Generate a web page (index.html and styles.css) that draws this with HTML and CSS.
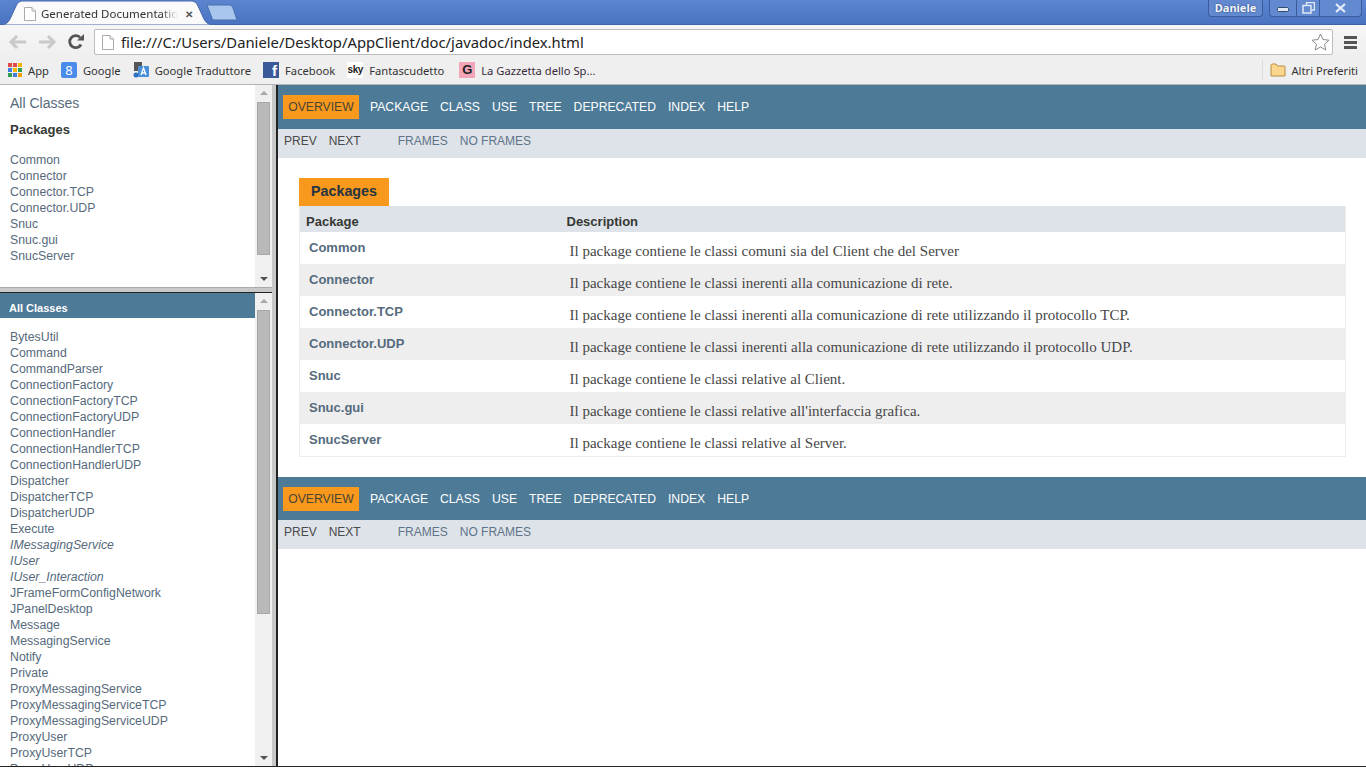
FILE: index.html
```html
<!DOCTYPE html>
<html lang="en">
<head>
    <meta charset="UTF-8">
    <title>Generated Documentation</title>
    <link rel="stylesheet" href="styles.css">
</head>
<body>
    <header class="browser">
        <section class="titlebar">
            <div class="tab">
                <svg class="tab-shape" width="214" height="25" viewBox="0 0 214 25"><path d="M0 25C6 25 9 22 11 17L16 6C18 2 20 1 24 1H190C194 1 196 2 198 6L203 17C205 22 208 25 214 25Z" fill="#fafafa" stroke="#4468a8"/></svg>
                <svg class="page-icon" width="12" height="14" viewBox="0 0 12 14"><path d="M.5.5H8L11.500 4V13.500H.5Z" fill="#fff" stroke="#aaa"/><path d="M8 .5V4H11.500" fill="#eee" stroke="#aaa"/></svg>
                <span class="tab-title">Generated Documentation</span>
                <span class="tab-close">&#10005;</span>
            </div>
            <svg class="new-tab" width="32" height="17" viewBox="0 0 32 17"><path d="M1 1H23C25 1 26 2 27 4L31 16H8C7 16 6 15 6 14Z" fill="#a9c6ef" stroke="#4a6ea8"/></svg>
            <div class="user-box">Daniele</div>
            <div class="win-buttons">
                <div class="win-btn min"><svg width="12" height="6" viewBox="0 0 12 6"><rect x=".5" y=".5" width="11" height="4" rx="1" fill="#dfe8f5" stroke="#33496e"/></svg></div>
                <div class="win-btn max"><svg width="13" height="12" viewBox="0 0 13 12"><path d="M4.500 3V.5H12.500V8H9.500" fill="none" stroke="#dfe8f5" stroke-width="1.500"/><rect x="1" y="3.500" width="8" height="7.500" fill="none" stroke="#dfe8f5" stroke-width="1.500"/></svg></div>
                <div class="win-btn close"><svg width="13" height="10" viewBox="0 0 13 10"><path d="M2 1L11 9M11 1L2 9" stroke="#e6eef9" stroke-width="2.200"/></svg></div>
            </div>
        </section>
        <section class="toolbar">
            <svg class="nav-icon" width="20" height="16" viewBox="0 0 20 16"><path d="M18 8H4M9 2L3 8L9 14" fill="none" stroke="#c9c9c9" stroke-width="3"/></svg>
            <svg class="nav-icon" width="20" height="16" viewBox="0 0 20 16"><path d="M2 8H16M11 2L17 8L11 14" fill="none" stroke="#c9c9c9" stroke-width="3"/></svg>
            <svg class="nav-icon reload" width="18" height="18" viewBox="0 0 18 18"><path d="M14 11.500A6 6 0 1 1 13 4.500" fill="none" stroke="#555" stroke-width="2.800"/><path d="M10 7.500H17V1Z" fill="#555"/></svg>
            <div class="omnibox">
                <svg width="12" height="15" viewBox="0 0 12 15"><path d="M.5.5H8L11.500 4V14.500H.5Z" fill="#fff" stroke="#aaa"/><path d="M8 .5V4H11.500" fill="#eee" stroke="#aaa"/></svg>
                <span class="url">file:///C:/Users/Daniele/Desktop/AppClient/doc/javadoc/index.html</span>
                <svg class="star" width="19" height="18" viewBox="0 0 19 18"><path d="M9.500 1L12 6.500L18 7.200L13.500 11.200L14.800 17L9.500 14L4.200 17L5.500 11.200L1 7.200L7 6.500Z" fill="#fff" stroke="#8a8a8a"/></svg>
            </div>
            <div class="menu-icon"><i></i><i></i><i></i></div>
        </section>
        <section class="bookmarks">
            <a><svg width="14" height="14" viewBox="0 0 14 14"><rect width="4" height="4" fill="#e04a3f"/><rect x="5" width="4" height="4" fill="#e04a3f"/><rect x="10" width="4" height="4" fill="#f5b400"/><rect y="5" width="4" height="4" fill="#3f7fe0"/><rect x="5" y="5" width="4" height="4" fill="#f5b400"/><rect x="10" y="5" width="4" height="4" fill="#2f9e50"/><rect y="10" width="4" height="4" fill="#2f9e50"/><rect x="5" y="10" width="4" height="4" fill="#3f7fe0"/><rect x="10" y="10" width="4" height="4" fill="#f5a000"/></svg>App</a>
            <a><span class="fav fav-g">8</span>Google</a>
            <a><svg width="16" height="16" viewBox="0 0 16 16"><rect x="1" y="0" width="8" height="9" fill="#555"/><rect x="5" y="4" width="11" height="11" rx="1" fill="#4a90d9"/><path d="M8 13L10.500 6L13 13M9 11H12" fill="none" stroke="#fff" stroke-width="1.300"/><circle cx="3" cy="13" r="2.500" fill="#2f6fc0"/></svg>Google Traduttore</a>
            <a><span class="fav fav-f">f</span>Facebook</a>
            <a><span class="fav fav-sky">sky</span>Fantascudetto</a>
            <a class="gazzetta"><span class="fav fav-gz">G</span>La Gazzetta dello Sp...</a>
            <span class="bm-sep"></span>
            <a class="other"><svg width="16" height="14" viewBox="0 0 16 14"><path d="M1 13V2.500C1 1.500 1.500 1 2.500 1H6L7.500 3H14C14.500 3 15 3.500 15 4V13Z" fill="#fbd68c" stroke="#b78c43"/></svg>Altri Preferiti</a>
        </section>
    </header>

    <main class="frames">
        <aside class="left-frames">
            <div class="frame top-frame">
                <div class="frame-body">
                    <p class="all-link">All Classes</p>
                    <h2 class="side-heading">Packages</h2>
                    <ul class="side-list">
                        <li>Common</li>
                        <li>Connector</li>
                        <li>Connector.TCP</li>
                        <li>Connector.UDP</li>
                        <li>Snuc</li>
                        <li>Snuc.gui</li>
                        <li>SnucServer</li>
                    </ul>
                </div>
                <div class="scrollbar">
                    <span class="arrow up"></span>
                    <div class="track"><div class="thumb thumb-top"></div></div>
                    <span class="arrow down"></span>
                </div>
            </div>
            <div class="frame-split"></div>
            <div class="frame bottom-frame">
                <div class="frame-body">
                    <h2 class="classes-bar">All Classes</h2>
                    <ul class="side-list classes">
                        <li>BytesUtil</li>
                        <li>Command</li>
                        <li>CommandParser</li>
                        <li>ConnectionFactory</li>
                        <li>ConnectionFactoryTCP</li>
                        <li>ConnectionFactoryUDP</li>
                        <li>ConnectionHandler</li>
                        <li>ConnectionHandlerTCP</li>
                        <li>ConnectionHandlerUDP</li>
                        <li>Dispatcher</li>
                        <li>DispatcherTCP</li>
                        <li>DispatcherUDP</li>
                        <li>Execute</li>
                        <li><em>IMessagingService</em></li>
                        <li><em>IUser</em></li>
                        <li><em>IUser_Interaction</em></li>
                        <li>JFrameFormConfigNetwork</li>
                        <li>JPanelDesktop</li>
                        <li>Message</li>
                        <li>MessagingService</li>
                        <li>Notify</li>
                        <li>Private</li>
                        <li>ProxyMessagingService</li>
                        <li>ProxyMessagingServiceTCP</li>
                        <li>ProxyMessagingServiceUDP</li>
                        <li>ProxyUser</li>
                        <li>ProxyUserTCP</li>
                        <li>ProxyUserUDP</li>
                    </ul>
                </div>
                <div class="scrollbar">
                    <span class="arrow up"></span>
                    <div class="track"><div class="thumb thumb-bottom"></div></div>
                    <span class="arrow down"></span>
                </div>
            </div>
        </aside>
        <div class="v-split"></div>
        <section class="content">
            <nav class="topnav">
                <span class="active">OVERVIEW</span>
                <a>PACKAGE</a>
                <a>CLASS</a>
                <a>USE</a>
                <a>TREE</a>
                <a>DEPRECATED</a>
                <a>INDEX</a>
                <a>HELP</a>
            </nav>
            <nav class="subnav">
                <span>PREV</span>
                <span>NEXT</span>
                <a class="first">FRAMES</a>
                <a>NO FRAMES</a>
            </nav>
            <div class="summary">
                <h3 class="caption">Packages</h3>
                <table>
                    <thead>
                        <tr><th class="col-pkg">Package</th><th>Description</th></tr>
                    </thead>
                    <tbody>
                        <tr><td class="name">Common</td><td class="desc">Il package contiene le classi comuni sia del Client che del Server</td></tr>
                        <tr><td class="name">Connector</td><td class="desc">Il package contiene le classi inerenti alla comunicazione di rete.</td></tr>
                        <tr><td class="name">Connector.TCP</td><td class="desc">Il package contiene le classi inerenti alla comunicazione di rete utilizzando il protocollo TCP.</td></tr>
                        <tr><td class="name">Connector.UDP</td><td class="desc">Il package contiene le classi inerenti alla comunicazione di rete utilizzando il protocollo UDP.</td></tr>
                        <tr><td class="name">Snuc</td><td class="desc">Il package contiene le classi relative al Client.</td></tr>
                        <tr><td class="name">Snuc.gui</td><td class="desc">Il package contiene le classi relative all'interfaccia grafica.</td></tr>
                        <tr><td class="name">SnucServer</td><td class="desc">Il package contiene le classi relative al Server.</td></tr>
                    </tbody>
                </table>
            </div>
            <nav class="topnav bottom-nav">
                <span class="active">OVERVIEW</span>
                <a>PACKAGE</a>
                <a>CLASS</a>
                <a>USE</a>
                <a>TREE</a>
                <a>DEPRECATED</a>
                <a>INDEX</a>
                <a>HELP</a>
            </nav>
            <nav class="subnav bottom-sub">
                <span>PREV</span>
                <span>NEXT</span>
                <a class="first">FRAMES</a>
                <a>NO FRAMES</a>
            </nav>
        </section>
    </main>
</body>
</html>
```

FILE: styles.css
```css
*{
    box-sizing: border-box;
}

html, body{
    margin: 0;
    height: 768px;
    overflow: hidden;
}

body{
    font-family: "Liberation Sans", Arial, sans-serif;
    background-color: #fff;
    display: flex;
    flex-direction: column;
}

/* browser chrome */

.browser{
    height: 85px;
    flex: none;
    font-family: "Noto Sans", sans-serif;
}

.titlebar{
    height: 25px;
    display: flex;
    background: linear-gradient(#5b85d0, #4a74c2);
    border-bottom: 1px solid #3f62a5;
}

.tab{
    width: 214px;
    height: 25px;
    flex: none;
    display: flex;
    align-items: center;
    position: relative;
    padding: 2px 0 0 24px;
}

.tab-shape{
    position: absolute;
    left: 0;
    top: 0;
}

.page-icon, .tab-title, .tab-close{
    position: relative;
}

.tab-title{
    width: 137px;
    margin-left: 5px;
    font-size: 11.500px;
    color: #333;
    white-space: nowrap;
    overflow: hidden;
    -webkit-mask-image: linear-gradient(to right, #000 88%, transparent);
    mask-image: linear-gradient(to right, #000 88%, transparent);
}

.tab-close{
    margin-left: 7px;
    font-size: 10px;
    font-weight: bold;
    color: #555;
}

.new-tab{
    margin: 4px 0 0 -8px;
    flex: none;
}

.user-box{
    margin-left: auto;
    height: 17px;
    width: 55px;
    border: 1px solid #3a5c9c;
    border-top: none;
    border-radius: 0 0 4px 4px;
    background-color: #6389d0;
    color: #f2f5fb;
    font-size: 11px;
    font-weight: bold;
    text-align: center;
    line-height: 16px;
    text-shadow: 0 0 2px #2b416e;
}

.win-buttons{
    margin: 0 4px 0 6px;
    height: 17px;
    display: flex;
    border: 1px solid #3a5c9c;
    border-top: none;
    border-radius: 0 0 4px 4px;
    background-color: #6389d0;
}

.win-btn{
    display: flex;
    align-items: center;
    justify-content: center;
    border-right: 1px solid #3a5c9c;
}

.win-btn.min{
    width: 27px;
    padding-top: 3px;
}

.win-btn.max{
    width: 23px;
}

.win-btn.close{
    width: 41px;
    border-right: none;
}

.toolbar{
    height: 33px;
    background: linear-gradient(#f6f6f6, #efefef);
    display: flex;
    align-items: center;
    padding: 1px 0 0 8px;
}

.nav-icon{
    margin-right: 9px;
    flex: none;
}

.reload{
    margin: 0 9px 0 1px;
}

.omnibox{
    width: 1239px;
    height: 26px;
    border: 1px solid #bcbcbc;
    border-radius: 2px;
    background-color: #fff;
    display: flex;
    align-items: center;
    padding-left: 7px;
}

.url{
    font-size: 14.800px;
    color: #222;
    margin-left: 7px;
    white-space: nowrap;
}

.star{
    margin-left: auto;
    margin-right: 2px;
}

.menu-icon{
    margin-left: 11px;
    width: 13px;
    display: grid;
    gap: 2px;
}

.menu-icon i{
    display: block;
    height: 3px;
    background-color: #555;
}

.bookmarks{
    height: 27px;
    background-color: #efefef;
    border-bottom: 1px solid #b4b4b4;
    display: flex;
    align-items: center;
    padding: 0 0 2px 8px;
    font-size: 11.200px;
    color: #333;
    white-space: nowrap;
}

.bookmarks a{
    display: flex;
    align-items: center;
    gap: 6px;
    margin-right: 12px;
}

.fav{
    width: 16px;
    height: 16px;
    display: block;
    text-align: center;
    flex: none;
}

.fav-g{
    background-color: #4b8bec;
    color: #fff;
    border-radius: 2px;
    font-size: 13px;
    line-height: 16px;
}

.fav-f{
    background-color: #3b5998;
    color: #fff;
    font: bold 15px/18px "Liberation Sans", sans-serif;
    text-align: right;
    padding-right: 2px;
}

.fav-sky{
    background-color: #fff;
    color: #222;
    font: bold 10px/15px "Liberation Sans", sans-serif;
    letter-spacing: -0.5px;
}

.fav-gz{
    background-color: #f2a6b8;
    color: #222;
    font: bold 13px/16px "Liberation Sans", sans-serif;
}

.bookmarks .gazzetta{
    color: #3a2a3a;
    margin-left: 3px;
}

.bm-sep{
    margin-left: auto;
    width: 1px;
    height: 20px;
    background-color: #dcdcdc;
}

.bookmarks .other{
    margin: 0 8px 0 7px;
    gap: 5px;
}

/* frames */

.frames{
    height: 682px;
    flex: none;
    display: flex;
    border-bottom: 1px solid #222;
}

.left-frames{
    width: 272px;
    flex: none;
    display: flex;
    flex-direction: column;
}

.frame{
    display: flex;
    overflow: hidden;
}

.top-frame{
    height: 202px;
}

.bottom-frame{
    flex: 1;
    min-height: 0;
}

.frame-split{
    height: 6px;
    flex: none;
    background-color: #c8c8c8;
    border-bottom: 1px solid #222;
    border-top: 1px solid #aaa;
}

.v-split{
    width: 6px;
    flex: none;
    background-color: #c8c8c8;
    border-right: 2px solid #222;
}

.frame-body{
    flex: 1;
    min-width: 0;
    overflow: hidden;
    background-color: #fff;
}

.scrollbar{
    width: 17px;
    flex: none;
    background-color: #f0f0f0;
    display: flex;
    flex-direction: column;
}

.arrow{
    height: 17px;
    flex: none;
    position: relative;
}

.arrow::after{
    content: "";
    position: absolute;
    left: 5px;
    width: 0;
    height: 0;
    border-left: 4px solid transparent;
    border-right: 4px solid transparent;
}

.arrow.up::after{
    top: 6px;
    border-bottom: 4px solid #a8a8a8;
}

.arrow.down::after{
    top: 7px;
    border-top: 4px solid #505050;
}

.track{
    flex: 1;
    padding: 0 2px 0 2px;
}

.thumb{
    background-color: #b9b9b9;
    border: 1px solid #a8a8a8;
}

.thumb-top{
    height: 153px;
}

.thumb-bottom{
    height: 304px;
}

.all-link{
    margin: 0;
    padding: 10px 0 0 10px;
    font-size: 14px;
    line-height: 16px;
    color: #566a7c;
}

.side-heading{
    margin: 11px 0 0 10px;
    font-size: 13px;
    line-height: 16px;
    color: #353833;
}

.side-list{
    list-style: none;
    margin: 0;
    padding: 14px 0 0 10px;
    font-size: 12.300px;
    line-height: 16px;
    color: #566a7c;
    white-space: nowrap;
}

.classes-bar{
    margin: 0;
    height: 25px;
    background-color: #4d7a97;
    color: #fff;
    font-size: 11px;
    line-height: 30px;
    padding-left: 9px;
}

.classes{
    padding-top: 11px;
}

/* main page */

.content{
    flex: 1;
    min-width: 0;
    overflow: hidden;
}

.topnav{
    height: 44px;
    background-color: #4d7a97;
    display: flex;
    align-items: center;
    padding: 0 0 0 5px;
    font-size: 12.200px;
    color: #fff;
    gap: 12px;
}

.bottom-nav{
    height: 43px;
    padding-top: 1px;
}

.topnav .active{
    background-color: #f8981d;
    color: #4a4632;
    width: 76px;
    height: 24px;
    line-height: 24px;
    text-align: center;
    margin-right: -1px;
}

.subnav{
    height: 29px;
    background-color: #dee3e9;
    display: flex;
    align-items: center;
    padding: 0 0 6px 6px;
    font-size: 12px;
    color: #4a4a48;
    gap: 12px;
}

.bottom-sub{
    padding-bottom: 5px;
}

.subnav a{
    color: #5f7488;
}

.subnav .first{
    margin-left: 25px;
}

.summary{
    padding: 20px 20px 20px 21px;
}

.caption{
    margin: 0;
    width: 90px;
    height: 28px;
    background-color: #f8981d;
    color: #253441;
    font-size: 14.300px;
    line-height: 26px;
    text-align: center;
}

table{
    width: 100%;
    border-collapse: collapse;
    border: 1px solid #ededed;
    border-top: none;
    table-layout: fixed;
}

th{
    height: 26px;
    background-color: #dee3e9;
    color: #353833;
    font-size: 13px;
    font-weight: bold;
    text-align: left;
    padding: 5px 0 0 6px;
}

.col-pkg{
    width: 261px;
}

td{
    height: 32px;
    padding: 0;
    vertical-align: top;
}

tbody tr:nth-child(even){
    background-color: #eeeeef;
}

.name{
    padding: 8px 0 0 9px;
    font-size: 13px;
    line-height: 16px;
    font-weight: bold;
    color: #566a7c;
}

.desc{
    padding: 11px 0 0 9px;
    font-family: "Liberation Serif", serif;
    font-size: 15px;
    line-height: 16px;
    color: #474747;
}
```
